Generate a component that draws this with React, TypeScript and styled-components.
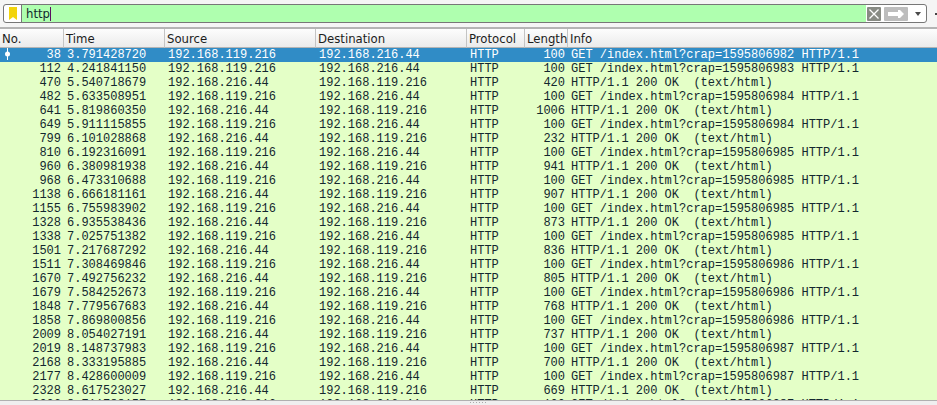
import React, { useState } from "react";
import styled, { createGlobalStyle, css } from "styled-components";

const GlobalStyle = createGlobalStyle`
  *, *::before, *::after { box-sizing: border-box; }
  body { margin: 0; background: #efefef; }
`;

const uiFont = css`
  font-family: "DejaVu Sans Condensed", "DejaVu Sans", sans-serif;
  font-size: 13px;
`;

const Window = styled.main`
  display: flex;
  flex-direction: column;
  height: 100vh;
  overflow: hidden;
  background: #efefef;
  color: #12272e;
`;

const FilterToolbar = styled.form`
  flex: none;
  display: flex;
  align-items: center;
  gap: 8px;
  height: 27px;
  padding-left: 3px;
  background: #f5f5f5;
`;

const FilterBox = styled.div`
  flex: 1;
  display: flex;
  align-items: center;
  height: 19px;
  border: 1px solid #777;
  border-radius: 3px;
  overflow: hidden;
  background: #fff;
`;

const IconButton = styled.button<{ $width: number; $fill?: string }>`
  flex: none;
  display: flex;
  align-items: center;
  justify-content: center;
  width: ${(p) => p.$width}px;
  height: 14px;
  padding: 0;
  border: 0;
  border-radius: 1px;
  background: ${(p) => p.$fill ?? "transparent"};
`;

const FilterField = styled.label`
  flex: 1;
  display: flex;
  align-items: center;
  min-width: 0;
  height: 17px;
  padding-left: 4px;
  border-left: 1px solid #777;
  background: #afffaf;
`;

const FilterInput = styled.input`
  ${uiFont}
  field-sizing: content;
  min-width: 1px;
  height: 17px;
  padding: 0;
  border: 0;
  outline: 0;
  background: transparent;
  color: #12272e;
  line-height: 17px;
  caret-color: transparent;
`;

const Caret = styled.span`
  flex: none;
  width: 1px;
  height: 14px;
  background: #5c1060;
`;

const FilterActions = styled.div`
  display: flex;
  align-items: center;
  gap: 3px;
  height: 17px;
  padding: 0 1px;
`;

const Overflow = styled.span`
  flex: none;
  width: 2px;
  height: 2px;
  background: #444;
`;

const PacketPane = styled.section`
  flex: 1;
  min-height: 0;
  overflow: hidden;
  border-top: 2px solid #b4b4b4;
  border-bottom: 1px solid #b0b0b0;
  background: #e4ffc7;
`;

const PacketTable = styled.table`
  width: 100%;
  table-layout: fixed;
  border-collapse: separate;
  border-spacing: 0;
`;

const Column = styled.col<{ $width?: number }>`
  width: ${(p) => (p.$width ? `${p.$width}px` : "auto")};
`;

const HeaderCell = styled.th`
  ${uiFont}
  height: 19px;
  padding: 1px 0 0 2px;
  border-right: 1px solid #c4c4c4;
  border-bottom: 1px solid #b4b4b4;
  background: linear-gradient(#fdfdfd, #ebebeb);
  color: #1c1c1c;
  font-weight: 400;
  line-height: 17px;
  text-align: left;
  white-space: nowrap;
  overflow: hidden;

  &:last-child { border-right: 0; }
`;

const PacketRow = styled.tr<{ $selected: boolean }>`
  background: ${(p) => (p.$selected ? "#308cc6" : "#e4ffc7")};
  color: ${(p) => (p.$selected ? "#fff" : "#12272e")};
`;

const Cell = styled.td<{ $numeric?: boolean }>`
  height: 14px;
  padding: 0 3px;
  font-family: "Liberation Mono", monospace;
  font-size: 12px;
  line-height: 14px;
  text-align: ${(p) => (p.$numeric ? "right" : "left")};
  white-space: pre;
  overflow: hidden;
`;

const NumberContent = styled.div`
  display: flex;
  align-items: center;
  justify-content: space-between;
  height: 14px;
`;

const Splitter = styled.div`
  flex: none;
  height: 4px;
  padding: 1px 0 0 470px;
`;

const Grip = styled.div`
  width: 17px;
  height: 1px;
  background: repeating-linear-gradient(90deg, #aaa 0 1px, transparent 1px 3px);
`;

const CLIENT = "192.168.119.216";
const SERVER = "192.168.216.44";

type Packet = { no: number; time: string; length: number; crap?: number };

const packets: Packet[] = [
  { no: 38, time: "3.791428720", length: 100, crap: 1595806982 },
  { no: 112, time: "4.241841150", length: 100, crap: 1595806983 },
  { no: 470, time: "5.540718679", length: 420 },
  { no: 482, time: "5.633508951", length: 100, crap: 1595806984 },
  { no: 641, time: "5.819860350", length: 1006 },
  { no: 649, time: "5.911115855", length: 100, crap: 1595806984 },
  { no: 799, time: "6.101028868", length: 232 },
  { no: 810, time: "6.192316091", length: 100, crap: 1595806985 },
  { no: 960, time: "6.380981938", length: 941 },
  { no: 968, time: "6.473310688", length: 100, crap: 1595806985 },
  { no: 1138, time: "6.666181161", length: 907 },
  { no: 1155, time: "6.755983902", length: 100, crap: 1595806985 },
  { no: 1328, time: "6.935538436", length: 873 },
  { no: 1338, time: "7.025751382", length: 100, crap: 1595806985 },
  { no: 1501, time: "7.217687292", length: 836 },
  { no: 1511, time: "7.308469846", length: 100, crap: 1595806986 },
  { no: 1670, time: "7.492756232", length: 805 },
  { no: 1679, time: "7.584252673", length: 100, crap: 1595806986 },
  { no: 1848, time: "7.779567683", length: 768 },
  { no: 1858, time: "7.869800856", length: 100, crap: 1595806986 },
  { no: 2009, time: "8.054027191", length: 737 },
  { no: 2019, time: "8.148737983", length: 100, crap: 1595806987 },
  { no: 2168, time: "8.333195885", length: 700 },
  { no: 2177, time: "8.428600009", length: 100, crap: 1595806987 },
  { no: 2328, time: "8.617523027", length: 669 },
  { no: 2336, time: "8.711788157", length: 100, crap: 1595806987 },
];

const columns = [
  { title: "No.", width: 64 },
  { title: "Time", width: 101 },
  { title: "Source", width: 151 },
  { title: "Destination", width: 151 },
  { title: "Protocol", width: 58 },
  { title: "Length", width: 43 },
  { title: "Info" },
];

const BookmarkIcon = () => (
  <svg width="8" height="13" viewBox="0 0 8 13" aria-hidden="true">
    <path d="M0 0h8v13L4 10 0 13z" fill="#f2d40c" />
  </svg>
);

const ClearIcon = () => (
  <svg width="14" height="14" viewBox="0 0 14 14" aria-hidden="true">
    <path d="M2.5 2.5l9 9M11.5 2.5l-9 9" stroke="#fff" strokeWidth="1.3" />
  </svg>
);

const ApplyIcon = () => (
  <svg width="24" height="14" viewBox="0 0 24 14" aria-hidden="true">
    <path d="M4 5h10V3h2l4 4-4 4h-2V9H4z" fill="#fff" />
  </svg>
);

const ChevronIcon = () => (
  <svg width="6" height="4" viewBox="0 0 6 4" aria-hidden="true">
    <path d="M0 0h6L3 4z" fill="#4a4a4a" />
  </svg>
);

const ConversationMarker = () => (
  <svg width="9" height="14" viewBox="0 0 9 14" aria-hidden="true">
    <path d="M4.5 1v13" stroke="#fff" />
    <circle cx="4.5" cy="8" r="2.5" fill="#fff" />
  </svg>
);

export default function App() {
  const [filter, setFilter] = useState("http");
  const [selected, setSelected] = useState(38);

  return (
    <Window>
      <GlobalStyle />
      <FilterToolbar onSubmit={(e) => e.preventDefault()}>
        <FilterBox>
          <IconButton type="button" $width={17} aria-label="Filter bookmarks">
            <BookmarkIcon />
          </IconButton>
          <FilterField>
            <FilterInput
              aria-label="Display filter"
              spellCheck={false}
              value={filter}
              onChange={(e) => setFilter(e.target.value)}
            />
            <Caret />
          </FilterField>
          <FilterActions>
            <IconButton type="button" $width={14} $fill="#888b84" aria-label="Clear filter" onClick={() => setFilter("")}>
              <ClearIcon />
            </IconButton>
            <IconButton type="submit" $width={24} $fill="#bdbdbd" aria-label="Apply filter">
              <ApplyIcon />
            </IconButton>
            <IconButton type="button" $width={14} aria-label="Recent filters">
              <ChevronIcon />
            </IconButton>
          </FilterActions>
        </FilterBox>
        <Overflow />
      </FilterToolbar>

      <PacketPane aria-label="Packet list">
        <PacketTable>
          <colgroup>
            {columns.map((c) => (
              <Column key={c.title} $width={c.width} />
            ))}
          </colgroup>
          <thead>
            <tr>
              {columns.map((c) => (
                <HeaderCell key={c.title} scope="col">{c.title}</HeaderCell>
              ))}
            </tr>
          </thead>
          <tbody>
            {packets.map((p) => (
              <PacketRow key={p.no} $selected={p.no === selected} onClick={() => setSelected(p.no)}>
                <Cell $numeric>
                  <NumberContent>
                    <span>{p.no === selected && <ConversationMarker />}</span>
                    <span>{p.no}</span>
                  </NumberContent>
                </Cell>
                <Cell>{p.time}</Cell>
                <Cell>{p.crap ? CLIENT : SERVER}</Cell>
                <Cell>{p.crap ? SERVER : CLIENT}</Cell>
                <Cell>HTTP</Cell>
                <Cell $numeric>{p.length}</Cell>
                <Cell>{p.crap ? `GET /index.html?crap=${p.crap} HTTP/1.1` : "HTTP/1.1 200 OK  (text/html)"}</Cell>
              </PacketRow>
            ))}
          </tbody>
        </PacketTable>
      </PacketPane>
      <Splitter>
        <Grip />
      </Splitter>
    </Window>
  );
}
